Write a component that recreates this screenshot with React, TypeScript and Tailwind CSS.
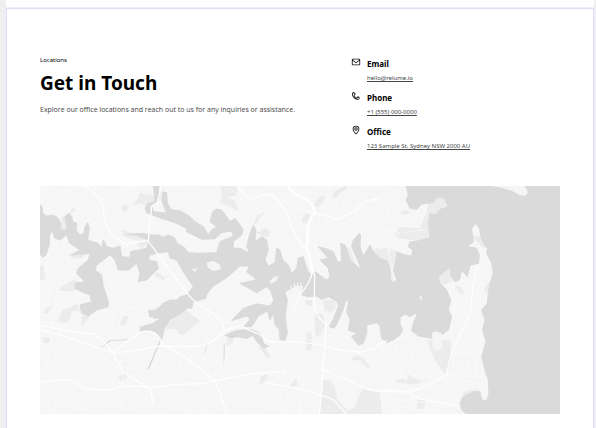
import type { ReactNode } from "react";

const harbour =
  "M0 57L6 62L8 82L20 90L40 87L55 97L62 112L60 127L72 134L82 127L78 112L75 92L85 82L95 90L98 107L110 112L108 132L120 147L132 142L135 122L143 110L148 127L145 147L142 160L155 167L175 172L185 187L190 162L200 182L220 187L240 180L245 212L270 214L272 197L295 192L320 187L325 172L320 160L290 147L262 145L310 142L330 147L355 147L370 154L385 147L405 157L410 172L430 182L445 200L475 202L530 200L540 167L580 150L575 135L545 140L525 158L485 160L460 147L440 137L440 127L410 112L380 102L355 94L320 80L315 67L325 52L345 47L340 0L358 0L360 32L350 52L335 62L340 77L370 80L380 82L365 42L368 17L380 20L382 52L395 72L420 74L450 92L465 107L490 122L505 147L515 132L530 122L510 107L518 77L530 69L545 72L560 92L570 107L585 97L600 117L610 132L605 147L580 167L580 187L600 187L630 202L620 182L630 142L640 117L648 132L645 167L665 152L680 162L685 192L675 222L685 240L705 232L710 187L720 192L728 222L745 237L755 262L770 247L775 217L790 212L795 232L805 257L816 268L825 257L860 282L870 272L865 247L840 222L865 217L835 182L855 187L880 197L892 227L905 227L902 172L915 177L930 222L955 244L963 247L935 182L940 162L958 142L962 147L960 182L970 210L990 177L1000 197L1020 218L1040 224L1050 247L1052 282L1060 290L1070 282L1060 252L1070 212L1070 197L1095 207L1115 210L1118 192L1105 182L1110 167L1140 164L1170 154L1165 112L1170 82L1185 87L1200 70L1220 64L1223 57L1210 34L1190 34L1180 50L1160 52L1145 54L1130 70L1110 67L1098 42L1105 27L1098 0H1560V684H1280L1265 672L1260 652L1270 632L1300 617L1320 617L1325 642L1340 644L1347 622L1345 582L1335 552L1325 512L1338 467L1328 432L1335 402L1325 372L1342 352L1345 322L1350 292L1360 262L1355 232L1340 202L1342 187L1325 162L1318 127L1308 112L1295 127L1300 167L1282 182L1310 187L1318 207L1315 232L1290 237L1282 272L1265 252L1258 282L1245 287L1232 272L1230 244L1195 272L1200 292L1220 312L1232 342L1225 372L1235 392L1225 432L1205 447L1175 457L1135 450L1115 434L1120 412L1132 384L1125 382L1110 392L1095 384L1080 394L1080 414L1088 432L1080 447L1060 462L1040 470L1025 457L1020 422L1012 410L980 417L980 442L970 472L955 477L935 452L950 442L925 432L930 402L920 377L927 340L915 347L910 370L890 415L882 427L868 422L880 400L895 360L890 345L865 332L845 340L828 330L802 332L785 326L790 300L770 297L745 312L735 317L742 342L735 392L742 442L735 464L720 462L718 432L705 417L700 380L690 402L682 375L655 390L635 422L612 422L630 400L620 390L575 404L610 367L650 354L690 360L702 342L692 315L680 302L650 320L600 292L635 285L650 280L620 258L628 240L600 240L560 275L520 300L500 325L498 337L460 347L455 367L440 367L430 377L390 402L375 422L365 462L345 437L302 437L300 424L340 412L360 397L330 392L325 374L350 372L370 352L390 342L415 342L420 332L440 327L460 302L430 257L410 222L390 217L385 197L350 202L330 207L325 222L350 227L355 247L320 282L295 287L300 262L290 232L265 252L235 252L225 222L210 207L190 222L170 237L165 252L185 267L190 302L205 347L205 362L170 372L145 390L125 382L120 357L155 347L150 327L125 317L105 307L105 292L135 287L110 262L115 247L145 222L150 202L95 207L120 192L90 172L80 147L60 162L45 157L35 132L28 150L28 175L18 207L8 214L0 205Z";

const inlets = [
  "M552 447L590 432L635 429L660 440L674 474L690 480L672 488L652 470L638 450L620 459L595 454L570 457Z",
  "M360 460L364 462L326 552L323 548Z",
  "M168 496L200 470L210 462L264 460L265 463L212 465L190 481Z",
  "M498 476L500 474L498 490L492 512Z",
  "M551 472L554 472L554 510L551 544Z",
  "M345 372L372 352L400 344L420 336L412 360L370 392L340 400Z",
];

const islands = [
  "M500 230L520 224L540 236L542 250L520 255L504 246Z",
  "M455 250L464 249L474 244L466 255L470 262Z",
  "M690 285L702 272L716 270L708 286L692 294Z",
  "M1138 328L1144 330L1147 342L1140 338Z",
  "M1355 0H1452L1462 12L1463 22L1455 30L1440 28L1415 14L1385 5Z",
];

const parks = [
  "M275 60L293 38L300 20L333 28L345 30L345 46L318 60L300 52Z",
  "M252 53L268 62L256 78L242 70Z",
  "M64 94L80 86L90 78L108 58L105 74L90 84L78 112L80 130L70 132L62 122Z",
  "M82 205L120 192L150 190L144 202L125 216L100 218Z",
  "M58 315L65 302L100 282L128 290L105 296L108 312L90 316Z",
  "M0 240L10 240L16 280L0 282Z",
  "M245 132L258 134L280 144L320 150L325 170L310 186L290 180L300 166L250 150Z",
  "M340 265L350 258L375 276L370 284Z",
  "M10 380L26 358L38 364L22 384Z",
  "M52 402L70 370L88 366L110 352L120 374L96 376L86 410L64 412Z",
  "M125 388L150 390L124 424Z",
  "M240 410L250 392L266 388L260 412L244 420Z",
  "M8 454L30 456L28 472L10 470Z",
  "M234 572L256 562L262 572L244 586Z",
  "M375 410L395 404L435 370L480 404L430 448L414 442L407 428L380 432Z",
  "M785 110L792 82L816 86L812 116Z",
  "M820 60L830 38L855 28L852 44L836 64Z",
  "M870 38L884 16L905 4L920 0L918 12L900 20L890 34Z",
  "M540 48L548 28L540 0L590 0L592 28L560 34L585 46L598 76L575 66Z",
  "M640 120L650 88L674 78L660 98L650 112Z",
  "M648 140L680 126L692 140L676 160L664 148Z",
  "M675 225L684 240L704 228L696 248L680 236Z",
  "M998 194L1010 187L1022 190L1020 220Z",
  "M915 177L930 190L945 230L930 222Z",
  "M1068 140L1078 122L1140 126L1150 100L1160 80L1165 54L1190 34L1210 34L1223 57L1200 70L1185 87L1170 82L1165 112L1170 154L1140 164L1100 160L1070 156Z",
  "M1078 80L1094 72L1112 78L1100 86Z",
  "M1020 188L1045 186L1068 196L1070 212L1056 240L1060 290L1050 280L1046 236L1020 218Z",
  "M1195 272L1230 244L1228 270L1236 288L1210 296L1200 292Z",
  "M1244 298L1262 302L1275 326L1256 320Z",
  "M1335 302L1350 284L1346 322L1330 312Z",
  "M1294 150L1318 150L1342 187L1326 184Z",
  "M1160 464L1180 460L1178 484L1190 494L1206 488L1206 462L1232 460L1233 532L1217 566L1190 532Z",
  "M1066 580L1102 578L1108 564L1114 576L1148 584L1138 594L1104 594L1070 588Z",
  "M1130 640L1155 638L1152 670L1132 668Z",
  "M796 342L816 342L816 360L796 358Z",
  "M850 342L886 342L888 366L870 380L852 372Z",
  "M824 380L848 384L856 418L840 448L826 450Z",
  "M800 440L814 438L816 480L812 494L796 492Z",
  "M656 484L668 474L692 510L684 518Z",
  "M560 456L582 454L576 478L560 480Z",
  "M660 572L680 564L682 576L668 592L660 596Z",
  "M744 604L770 576L772 600L756 604Z",
  "M850 582L872 584L884 600L892 640L920 670L940 684H840Z",
  "M934 514L950 506L974 520L992 550L976 542L960 522L934 524Z",
  "M966 610L1020 620L1026 684H910L944 664Z",
  "M1260 642L1276 616L1306 610L1320 617L1284 624L1270 640Z",
];

const mainRoads = [
  "M134 0Q178 30 186 50Q190 82 200 120Q206 144 232 154Q250 176 270 174Q300 162 325 166Q350 200 380 240Q410 282 450 332Q480 366 510 376L546 406Q552 420 550 428",
  "M361 0Q360 26 352 50L334 62Q334 90 328 120L325 166",
  "M0 432Q60 446 110 464Q160 482 218 500Q290 496 330 484L370 480Q400 490 440 516L525 584Q548 640 560 684",
  "M0 418Q90 438 160 444Q190 460 218 500Q240 540 250 560Q300 590 330 610L340 650",
  "M218 500Q240 480 300 440Q340 426 360 458L370 480Q440 484 480 480Q530 468 546 440Q580 420 600 420L660 446L690 468",
  "M744 0Q756 22 786 34Q818 46 824 78Q806 100 804 130L800 184Q812 220 818 256Q810 290 786 318L772 342L760 380",
  "M818 256L824 266L823 342Q818 372 840 398L856 414Q862 440 848 540L846 600L838 684",
  "M596 0Q606 26 640 42Q660 24 696 28Q740 70 752 110Q764 160 800 190",
  "M824 82Q860 90 892 100Q920 94 960 60Q980 40 1020 38",
  "M690 468Q760 462 850 478L900 492L960 498Q1000 494 1016 476L1040 464",
  "M0 590Q60 580 90 582L130 604Q200 620 240 602Q290 596 330 606Q400 592 480 594L560 578Q620 560 740 558",
  "M680 590Q740 600 800 614Q850 628 880 642L920 684",
  "M848 550Q890 568 940 590Q980 612 1020 616L1110 618Q1150 608 1218 568",
  "M1218 568L1235 500Q1270 430 1290 380L1300 300L1312 240",
  "M1020 608L1110 618L1124 636L1260 660",
];

const minorRoads = [
  "M0 10Q60 50 110 64L185 130M80 0L30 70M160 60L220 20L300 0M190 52L240 40L280 80L330 96",
  "M260 110L360 122L440 150L520 166M380 240L300 290L240 330L180 350M205 215L215 300L218 380L216 500",
  "M20 240L26 340L36 430L20 560L0 610M36 430L120 390L218 382L300 360",
  "M218 500L160 540L128 580L128 640L140 684M128 640L60 656L0 664M60 430L50 560L44 684",
  "M216 410L220 440L240 460L300 560M330 610L440 650L510 684M330 606L340 550L348 490",
  "M250 560L240 684M170 500L110 580M0 520L60 540L170 590M420 520L410 590L450 684",
  "M500 400L470 460L390 484M440 516L480 594L540 640M546 440L600 510L640 560L560 590",
  "M640 550L740 500L800 480M660 446L700 520L740 560L720 640L740 684M690 440L740 560",
  "M560 684L640 620L680 590L740 560M780 342L770 400L780 460L790 560L780 684",
  "M824 340L770 342M800 460L860 470M810 530L860 560L900 540L960 500M740 540L850 600",
  "M640 42L660 90L720 100L800 114M560 0L620 50L680 120L730 200M700 28L760 60L820 80",
  "M752 70L860 90M870 0L880 60L880 160M920 20L900 100L960 180M960 60L970 140M840 140L920 130",
  "M740 120L820 130L800 190M830 190L840 240M760 200L720 160L660 152",
  "M1030 0L1046 80L1036 140L1050 200M1046 100L1100 112L1130 86M1020 60L1060 50M1090 140L1160 130",
  "M1060 190L1100 180M1030 130L1080 140L1040 200M1045 186L1058 270",
  "M1040 470L1100 450L1160 460M1060 464L1080 540L1110 618M1100 440L1120 520L1180 560L1218 568",
  "M1020 480L1070 520L1100 580M1190 530L1160 560L1110 618M1218 568L1340 574M1235 500L1325 504",
  "M1250 420L1330 420M1270 380L1330 470M1290 380L1280 560M1310 400L1310 570M1300 300L1270 280L1240 290",
  "M1312 230L1330 310L1310 380M1235 370L1260 342L1290 340M1124 636L1120 684M1050 616L1060 684M1180 646L1184 684",
  "M1020 640L1160 650L1160 684M1218 568L1340 600L1325 640M1260 550L1240 600L1200 640",
  "M520 330L560 310L620 330L690 360M540 370L600 340L640 350M480 400L520 360L560 320",
];

function CoastMap() {
  return (
    <svg
      role="img"
      aria-label="Map of Sydney"
      viewBox="0 0 1560 684"
      preserveAspectRatio="xMidYMid slice"
      className="block w-full"
    >
      <defs>
        <pattern id="streets" width="22" height="20" patternUnits="userSpaceOnUse" patternTransform="rotate(8)">
          <path d="M0 5H22M8 0V20" stroke="#f9f9f9" strokeWidth="2" fill="none" />
        </pattern>
      </defs>
      <rect width="1560" height="684" fill="#f6f6f6" />
      <rect width="1560" height="684" fill="url(#streets)" />
      <g fill="#ececec">
        {parks.map((d) => (
          <path key={d} d={d} />
        ))}
      </g>
      <g stroke="#fbfbfb" strokeWidth="2" fill="none" strokeLinejoin="round">
        {minorRoads.map((d) => (
          <path key={d} d={d} />
        ))}
      </g>
      <g fill="#dadada">
        <path d={harbour} stroke="#dadada" strokeWidth="3" strokeLinejoin="round" />
        {inlets.map((d) => (
          <path key={d} d={d} />
        ))}
      </g>
      <g fill="#f5f5f5">
        {islands.map((d) => (
          <path key={d} d={d} />
        ))}
        <path d="M1176 440L1188 436L1205 442L1206 488L1190 494L1178 484Z" />
      </g>
      <path
        d="M758 318L752 300M768 314L762 294M778 310L772 290M786 306L782 290"
        stroke="#f5f5f5"
        strokeWidth="4"
      />
      <g stroke="#fefefe" strokeWidth="4" fill="none" strokeLinejoin="round">
        {mainRoads.map((d) => (
          <path key={d} d={d} />
        ))}
      </g>
      <path
        d="M744 0Q756 22 786 34Q818 46 824 78Q806 100 804 130L800 184Q812 220 818 256"
        stroke="#fefefe"
        strokeWidth="8"
        fill="none"
      />
    </svg>
  );
}

function MailIcon() {
  return (
    <svg viewBox="0 0 24 24" className="size-[10px]" fill="#111" aria-hidden="true">
      <path d="M20 4H4a2 2 0 0 0-2 2v12a2 2 0 0 0 2 2h16a2 2 0 0 0 2-2V6a2 2 0 0 0-2-2zm0 2v.5l-8 6.2-8-6.2V6zM4 18V9l8 6.2L20 9v9z" />
    </svg>
  );
}

function PhoneIcon() {
  return (
    <svg viewBox="0 0 24 24" className="size-[10px]" fill="#111" aria-hidden="true">
      <path d="M17.7 12.8a1 1 0 0 0-1.4 0l-2.6 2.6c-1-.4-2.5-1-3.4-1.9s-1.6-2.5-1.9-3.4L11 7.7a1 1 0 0 0 0-1.4l-4-4a1 1 0 0 0-1.4 0L2.900 5c-.4.4-.6.9-.6 1.4 0 1.4.4 6.3 4.200 10.1s8.700 4.200 10.1 4.200h.4c.5 0 1-.2 1.4-.6l2.7-2.7a1 1 0 0 0 0-1.4zm-.8 5.9c-1.2 0-5.5-.3-8.900-3.700C4.600 11.600 4.300 7.300 4.300 6.500l2-2 2.600 2.600-2 2a1 1 0 0 0-.3.900c0 .1.600 3 2.600 4.900s4.800 2.600 4.900 2.600a1 1 0 0 0 .9-.3l2-2 2.600 2.600z" />
    </svg>
  );
}

function PinIcon() {
  return (
    <svg viewBox="0 0 24 24" className="size-[10px]" fill="#111" aria-hidden="true">
      <path
        fillRule="evenodd"
        d="M12 1.500a8 8 0 0 0-8 8c0 6.500 7.100 12.300 7.400 12.600a1 1 0 0 0 1.200 0C12.900 21.800 20 16 20 9.500a8 8 0 0 0-8-8zm0 18.500c-1.800-1.600-6-6-6-10.500a6 6 0 0 1 12 0c0 4.500-4.200 8.900-6 10.500z"
      />
      <path fillRule="evenodd" d="M12 5.500a4 4 0 1 0 0 8 4 4 0 0 0 0-8zm0 6a2 2 0 1 1 0-4 2 2 0 0 1 0 4z" />
    </svg>
  );
}

type ContactProps = { icon: ReactNode; title: string; href: string; children: ReactNode };

function Contact({ icon, title, href, children }: ContactProps) {
  return (
    <li className="flex gap-[6px] pt-px">
      {icon}
      <div>
        <h2 className="text-[8px] leading-[14px] font-bold text-black">{title}</h2>
        <a href={href} className="block text-[6px] leading-[14px] text-[#444] underline">
          {children}
        </a>
      </div>
    </li>
  );
}

export default function App() {
  return (
    <div className="flex min-h-screen flex-col bg-[#f0efef] pr-[2px] pl-[6px] font-['Noto_Sans','Open_Sans',sans-serif]">
      <div className="h-2 bg-white" />
      <main className="flex-1 border border-b-0 border-[#dedbfa] bg-white px-[33px] pt-[47px] pb-[14px] ring-1 ring-[#eeedfb]">
        <div className="grid grid-cols-[1fr_209px]">
          <header>
            <p className="text-[6px] leading-[8px] text-black">Locations</p>
            <h1 className="mt-1 text-[19px] leading-[31px] font-bold text-black">Get in Touch</h1>
            <p className="mt-1 font-['Open_Sans',sans-serif] text-[7px] leading-[14px] text-[#444]">
              Explore our office locations and reach out to us for any inquiries or assistance.
            </p>
          </header>
          <ul className="flex flex-col gap-[5px]">
            <Contact icon={<MailIcon />} title="Email" href="mailto:hello@relume.io">
              hello@relume.io
            </Contact>
            <Contact icon={<PhoneIcon />} title="Phone" href="tel:+15550000000">
              +1 (555) 000-0000
            </Contact>
            <Contact icon={<PinIcon />} title="Office" href="#map">
              123 Sample St, Sydney NSW 2000 AU
            </Contact>
          </ul>
        </div>
        <div id="map" className="mt-[33px]">
          <CoastMap />
        </div>
      </main>
    </div>
  );
}
